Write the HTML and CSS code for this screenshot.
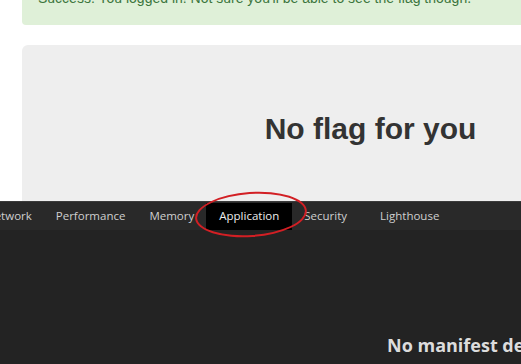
FILE: index.html
```html
<!DOCTYPE html>
<html lang="en">
<head>
    <meta charset="UTF-8">
    <meta name="viewport" content="width=device-width, initial-scale=1.0">
    <title>No flag for you</title>
    <link rel="stylesheet" href="styles.css">
</head>
<body>
    <div class="page">
        <div class="alert">Success: You logged in! Not sure you'll be able to see the flag though.</div>
        <div class="jumbotron">
            <h1>No flag for you</h1>
        </div>
    </div>

    <div class="devtools">
        <div class="tabbar">
            <span class="tab">Network</span>
            <span class="tab">Performance</span>
            <span class="tab">Memory</span>
            <span class="tab active">Application</span>
            <span class="tab">Security</span>
            <span class="tab tab-last">Lighthouse</span>
            <span class="highlight"></span>
        </div>
        <div class="panel">
            <div class="empty">No manifest detected</div>
        </div>
    </div>
</body>
</html>
```

FILE: styles.css
```css
* {
    margin: 0;
    padding: 0;
    box-sizing: border-box;
}

body {
    width: 521px;
    height: 364px;
    overflow: hidden;
    background-color: #ffffff;
    font-family: 'Liberation Sans', Arial, sans-serif;
}

/* page behind the devtools */
.page {
    width: 741px;
    height: 201px;
    padding: 0 22px;
    overflow: hidden;
}

.alert {
    margin-top: -27px;
    padding: 15px 16px 17px;
    background-color: #dff0d8;
    color: #3c763d;
    border-radius: 4px;
    font-size: 14px;
    line-height: 20px;
}

.jumbotron {
    margin-top: 20px;
    height: 200px;
    padding-top: 67px;
    background-color: #eeeeee;
    border-radius: 6px;
    text-align: center;
}

.jumbotron h1 {
    font-size: 30px;
    line-height: 33px;
    font-weight: bold;
    color: #333333;
}

/* devtools */
.devtools {
    height: 163px;
    font-family: 'Open Sans', sans-serif;
}

.tabbar {
    position: relative;
    display: flex;
    height: 29px;
    padding-top: 1px;
    margin-left: -26px;
    background-color: #292929;
    border-top: 1px solid #3b3b3b;
}

.tab {
    padding: 0 12px 2px;
    font-size: 11.5px;
    line-height: 25px;
    color: #cfcfcf;
    white-space: nowrap;
}

.tab.active {
    padding: 0 13px 2px;
    background-color: #000000;
    color: #ececec;
}

.tab-last {
    margin-left: 9px;
}

.highlight {
    position: absolute;
    left: 221px;
    top: -10px;
    width: 112px;
    height: 45px;
    border: 2px solid #d21f24;
    border-radius: 50%;
    transform: rotate(-4deg);
}

.panel {
    height: 134px;
    padding: 103px 0 0 387px;
    background-color: #232323;
}

.empty {
    font-size: 18px;
    line-height: 24px;
    font-weight: bold;
    color: #dcdcdc;
    white-space: nowrap;
}
```
